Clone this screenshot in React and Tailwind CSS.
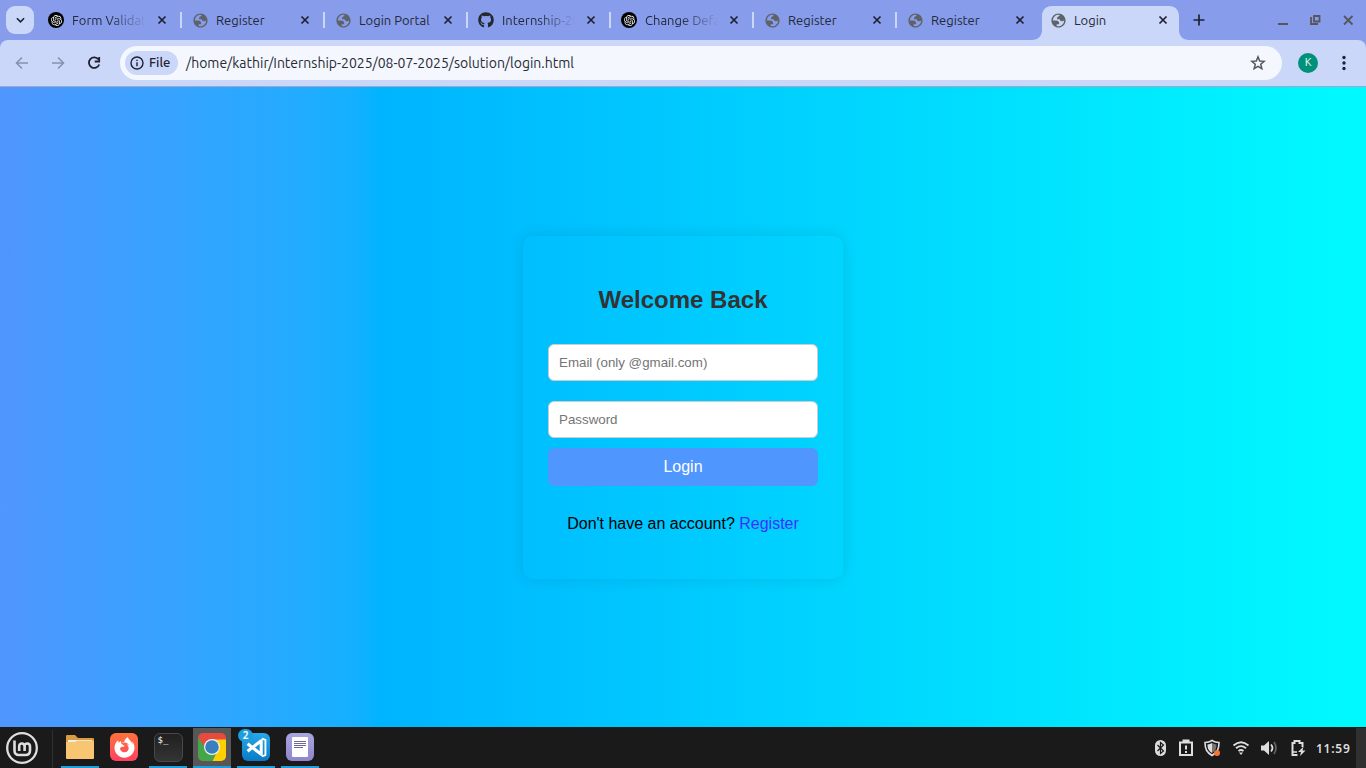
import { FaGithub, FaFirefoxBrowser } from "react-icons/fa";
import { SiOpenai } from "react-icons/si";

const UI = "font-['Ubuntu','Noto_Sans',sans-serif]";

function Globe() {
  return (
    <svg viewBox="0 0 24 24" className="size-[17px] fill-[#5f6368]">
      <path
        fillRule="evenodd"
        d="M12 2c5.520 0 10 4.480 10 10s-4.480 10-10 10S2 17.520 2 12 6.480 2 12 2zM4 12h4.400c3.407.022 4.922 1.730 4.543 5.127H9.488v2.470a8.004 8.004 0 0 0 10.498-8.083C19.327 12.504 18.332 13 17 13c-2.137 0-3.206-.916-3.206-2.750h-3.748c-.274-2.728.683-4.092 2.870-4.092 0-.975.327-1.597.811-1.970A8.004 8.004 0 0 0 4 12z"
      />
    </svg>
  );
}

function Favicon({ kind }) {
  if (kind === "ai")
    return (
      <span className="flex size-4 items-center justify-center rounded-full bg-black">
        <SiOpenai className="size-[11px] text-white" />
      </span>
    );
  if (kind === "git") return <FaGithub className="size-4 text-[#24292f]" />;
  return <Globe />;
}

function Cross({ className = "" }) {
  return (
    <svg viewBox="0 0 10 10" className={"size-[10px] " + className} fill="none" stroke="#1f2130" strokeWidth="1.7">
      <path d="M1.500 1.500l7 7M8.500 1.500l-7 7" />
    </svg>
  );
}

const tabs = [
  ["ai", "Form Validat"],
  ["globe", "Register"],
  ["globe", "Login Portal"],
  ["git", "Internship-20"],
  ["ai", "Change Defa"],
  ["globe", "Register"],
  ["globe", "Register"],
  ["globe", "Login"],
];

const faded = [0, 3, 4];

function Tab({ kind, label, index }) {
  const first = index === 0;
  return (
    <div className={"relative flex h-[34px] shrink-0 items-center pb-[6px] " + (first ? "w-[144px]" : "w-[143px]")}>
      {index === 7 && (
        <svg viewBox="0 0 157 34" className="absolute top-0 -left-[8px] h-[34px] w-[157px] fill-[#cad7f9]">
          <path d="M0 34C6 34 10 30 10 24V10C10 4 14 0 20 0H137C143 0 147 4 147 10V24C147 30 151 34 157 34Z" />
        </svg>
      )}
      <span className="relative ml-[9px] flex w-[18px] justify-center">
        <Favicon kind={kind} />
      </span>
      <span
        className={
          "relative ml-[7px] text-[13px] leading-5 whitespace-nowrap text-[#25283a] " +
          (first ? "w-[76px] " : "w-[75px] ") +
          (faded.includes(index) ? "[mask-image:linear-gradient(to_right,black_48%,transparent_98%)]" : "")
        }
      >
        {label}
      </span>
      <Cross className="relative ml-[9px]" />
      {index < 6 && <span className="absolute top-[6px] right-0 h-4 w-[2px] bg-[#cad7f9]" />}
    </div>
  );
}

function Browser() {
  return (
    <header className={"flex h-[87px] flex-col bg-[#879deb] " + UI}>
      <div className="flex h-10 items-start pt-[6px]">
        <div className="mr-[4px] ml-[6px] flex h-7 w-7 shrink-0 items-center justify-center rounded-[9px] bg-[#cad7f9]">
          <svg viewBox="0 0 10 6" className="h-[6px] w-[9px]" fill="none" stroke="#1f2130" strokeWidth="1.8">
            <path d="M1 1l4 4 4-4" />
          </svg>
        </div>
        {tabs.map(([kind, label], i) => (
          <Tab key={i} kind={kind} label={label} index={i} />
        ))}
        <svg viewBox="0 0 12 12" className="mt-2 ml-[10px] size-3" fill="none" stroke="#1f2130" strokeWidth="1.7">
          <path d="M6 .5v11M.5 6h11" />
        </svg>
        <svg viewBox="0 0 76 14" className="mt-[7px] mr-[12px] ml-auto h-[14px] w-[76px]" fill="none" stroke="#56565b" strokeWidth="1.800">
          <path d="M0 11h10M36 3h5.500v5.500h-5.500zM33 4v7h7M66 3l8.500 8.500M74.500 3l-8.500 8.500" />
        </svg>
      </div>
      <div className="flex h-[47px] items-center rounded-t-[8px] border-b border-[#a0a8c5] bg-[#cad7f9] pb-[1px]">
        <svg viewBox="0 0 94 16" className="ml-[14px] h-4 w-[94px]" fill="none" stroke="#8991ac" strokeWidth="1.600">
          <path d="M14 8H3M8 2.500L2.500 8 8 13.500M38 8h11M44 2.500l5.500 5.500-5.500 5.500" />
          <path d="M84.500 4.500A5.300 5.300 0 1 0 85.200 9.500M85.200 2v4.500h-4.500" stroke="#1f2130" strokeWidth="1.8" />
        </svg>
        <div className="ml-[12px] flex h-[34px] w-[1162px] items-center rounded-full bg-[#f4f7fe] pl-[5px]">
          <div className="flex h-6 w-[53px] items-center rounded-full bg-[#cad7f9] pl-[5px] text-[13px] font-medium text-[#1f2130]">
            <svg viewBox="0 0 14 14" className="mr-[5px] size-[14px]" fill="none" stroke="#1f2130" strokeWidth="1.400">
              <circle cx="7" cy="7" r="6" />
              <path d="M7 6.200v4M7 3.700v1.400" />
            </svg>
            <span className="pt-[1px]">File</span>
          </div>
          <span className="ml-[8px] pt-[2px] text-[14px] tracking-[-0.01px] text-[#282a33]">
            /home/kathir/Internship-2025/08-07-2025/solution/login.html
          </span>
          <svg viewBox="0 0 16 16" className="mr-[16px] ml-auto size-4" fill="none" stroke="#55585f" strokeWidth="1.5">
            <path d="M8 1.800l1.700 4.200 4.500.350-3.450 2.950 1.100 4.400L8 11.300l-3.850 2.400 1.100-4.400L1.800 6.350 6.300 6z" />
          </svg>
        </div>
        <span className="ml-4 flex size-5 items-center justify-center rounded-full bg-[#00917b] text-[11px] text-white">K</span>
        <svg viewBox="0 0 4 16" className="ml-[24px] h-4 w-1 fill-[#1f2130]">
          <circle cx="2" cy="2.500" r="1.700" />
          <circle cx="2" cy="8" r="1.700" />
          <circle cx="2" cy="13.500" r="1.700" />
        </svg>
      </div>
    </header>
  );
}

function LoginPage() {
  return (
    <main className="flex h-[640px] items-center justify-center bg-[linear-gradient(to_right,#5096ff_0%,#22acff_22%,#12b0ff_26.300%,#00b4ff_27.800%,#00faff_100%)] font-['Liberation_Sans',sans-serif]">
      <form className="flex h-[343px] w-[320px] flex-col rounded-[10px] px-[25px] shadow-[0_0_15px_rgba(0,0,0,0.1)]" onSubmit={(e) => e.preventDefault()}>
        <h2 className="mt-[50px] text-center text-[24px] leading-[27px] font-bold text-[#333]">Welcome Back</h2>
        <input className="mt-[31px] h-[37px] rounded-[6px] border border-[#ccc] bg-white px-[10px] text-[13.333px] placeholder:text-[#757575]" placeholder="Email (only @gmail.com)" />
        <input type="password" className="mt-5 h-[37px] rounded-[6px] border border-[#ccc] bg-white px-[10px] text-[13.333px] placeholder:text-[#757575]" placeholder="Password" />
        <button className="mt-[10px] h-[38px] rounded-[6px] bg-[#5096ff] text-[16px] text-white">Login</button>
        <p className="mt-7 text-center text-[16px] leading-[19px] text-black">
          Don't have an account? <a className="text-[#3f2fff]">Register</a>
        </p>
      </form>
    </main>
  );
}

function Task({ children, open, active }) {
  return (
    <div className={"relative mr-[6px] flex h-10 w-[38px] items-center justify-center pb-[2px] " + (active ? "bg-[#575757]" : "")}>
      {children}
      {open && <span className="absolute bottom-0 left-0 h-[2px] w-[38px] bg-[#1f9ede]" />}
    </div>
  );
}

function Taskbar() {
  return (
    <footer className="flex h-[41px] items-end bg-[#1a1a1a] font-['Noto_Sans',sans-serif]">
      <svg viewBox="0 0 32 32" className="mb-[4px] ml-[6px] size-8" fill="none" stroke="#dedede" strokeWidth="2.600">
        <circle cx="16" cy="16" r="14.800" strokeWidth="2.300" />
        <path d="M8.500 8.500V18.500Q8.500 23 13 23H19.500Q24 23 24 18.500V14.500Q24 11.500 21.300 11.500T18.600 14.500V19M18.600 14.500Q18.600 11.500 15.900 11.500T13.200 14.500V19" />
      </svg>
      <div className="mr-2 ml-[14px] h-[38px] w-px bg-[#303030]" />
      <Task open>
        <svg viewBox="0 0 28 26" className="size-7">
          <path d="M0 2q0-1 1-1h8l3 3h15q1 0 1 1v5H0z" fill="#d79d42" />
          <path d="M2 6h24v4H2z" fill="#efede8" />
          <path d="M0 8h9l2-1.200h17V24q0 1-1 1H1q-1 0-1-1z" fill="#f8c672" />
        </svg>
      </Task>
      <Task>
        <span className="flex size-7 items-center justify-center rounded-[6px] bg-linear-to-b from-[#ff7139] to-[#ff4060]">
          <FaFirefoxBrowser className="size-[21px] text-white" />
        </span>
      </Task>
      <Task open>
        <span className="flex size-[29px] rounded-[6px] border border-[#484848] bg-linear-to-b from-[#202020] to-[#343434] pl-[3px] font-['DejaVu_Sans_Mono',monospace] text-[9px] leading-[13px] text-white">$_</span>
      </Task>
      <Task open active>
        <svg viewBox="0 0 28 28" className="size-7">
          <defs><clipPath id="chrome"><rect width="28" height="28" rx="5" /></clipPath></defs>
          <g clipPath="url(#chrome)">
            <path d="M0 0h28v28H0z" fill="#e84940" />
            <path d="M14 6.500h14v21.500H14.500L20 14z" fill="#ffd000" />
            <path d="M0 4l8 12 10 5-3.500 7H0z" fill="#45a549" />
          </g>
          <circle cx="14" cy="14" r="8" fill="#f3f3f3" />
          <circle cx="14" cy="14" r="6.800" fill="#397fbd" />
        </svg>
      </Task>
      <Task open>
        <span className="flex size-7 items-center justify-center rounded-[6px] bg-linear-to-b from-[#27a9e9] to-[#087bc8]">
          <svg viewBox="0 0 20 20" className="size-[21px]" fill="none" stroke="#fff" strokeWidth="2.900" strokeLinejoin="round">
            <path d="M1.500 6.500L14.500 16.500V3.500L1.500 13.500" />
            <path d="M15 1.500l3.500 1.300v14.400l-3.500 1.300" strokeWidth="1.800" />
          </svg>
        </span>
        <span className="absolute top-[1px] left-[1px] flex h-[13px] w-[15px] items-center justify-center rounded-full bg-[#1f9ede] text-[10px] font-semibold text-white">2</span>
      </Task>
      <Task open>
        <span className="flex size-7 items-center justify-center rounded-[6px] bg-linear-to-b from-[#aaa6df] to-[#8d86cc]">
          <svg viewBox="0 0 16 20" className="h-5 w-4">
            <rect width="16" height="20" rx="1" fill="#fff" />
            <path d="M2 4.500h12M2 6.500h12M2 8.500h12M2 10.500h9" stroke="#6d679e" strokeWidth="1" />
          </svg>
        </span>
      </Task>
      <div className="ml-auto flex h-10 items-center">
        <svg viewBox="0 0 152 18" className="h-[18px] w-[152px]" fill="none" stroke="#dedede">
          <rect x="0" y="1" width="11" height="16" rx="5.500" fill="#dedede" stroke="none" />
          <path d="M2.500 6l6 6-3 2.500v-11l3 2.500-6 6" stroke="#1a1a1a" strokeWidth="1.200" />
          <path d="M25 3.500h12v12.500h-12zM28.500 3V1.500h5V3M31 6.500v4M31 12v2" strokeWidth="2" />
          <path d="M57 1.500q-3 2-7 2c0 7 2 10 7 13 5-3 7-6 7-13q-4 0-7-2z" strokeWidth="1.600" />
          <path d="M57 4q-2 1.300-4.500 1.500c0 4.500 1.500 6.500 4.500 8.500z" fill="#dedede" stroke="none" />
          <path d="M57 4q2 1.300 4.500 1.500c0 4.500-1.500 6.500-4.500 8.500z" fill="#777" stroke="none" />
          <circle cx="62" cy="14" r="3" fill="#f87436" stroke="none" />
          <path d="M78.500 6.500q7.500-6.500 15 0M81 9.300q5-4.300 10 0M83.500 12q2.500-2 5 0" strokeWidth="1.800" />
          <path d="M86 16l-2-2.500h4z" fill="#dedede" stroke="none" />
          <path d="M106 6.500h3l5-4.500v14l-5-4.500h-3z" fill="#dedede" stroke="none" />
          <path d="M116 5.500q3 3.500 0 7" strokeWidth="1.800" />
          <path d="M119 3q4 6 0 12" strokeWidth="1.600" stroke="#666" />
          <path d="M142.500 16h-5V4h2V2h5v2h3v4" strokeWidth="2" />
          <path d="M148.500 7.500l-5.500 5.500h3l-1 4 5.500-5.500h-3z" fill="#dedede" stroke="none" />
          <path d="M138 13h4" strokeWidth="1.500" />
        </svg>
        <span className="mr-[5px] ml-[9px] w-[35px] pt-[1px] text-[12px] font-semibold tracking-[0.750px] whitespace-nowrap text-[#dedede]">11:59</span>
        <div className="h-10 w-[10px] bg-[#303030]" />
      </div>
    </footer>
  );
}

export default function App() {
  return (
    <div className="flex h-[768px] w-[1366px] flex-col overflow-hidden">
      <Browser />
      <LoginPage />
      <Taskbar />
    </div>
  );
}
